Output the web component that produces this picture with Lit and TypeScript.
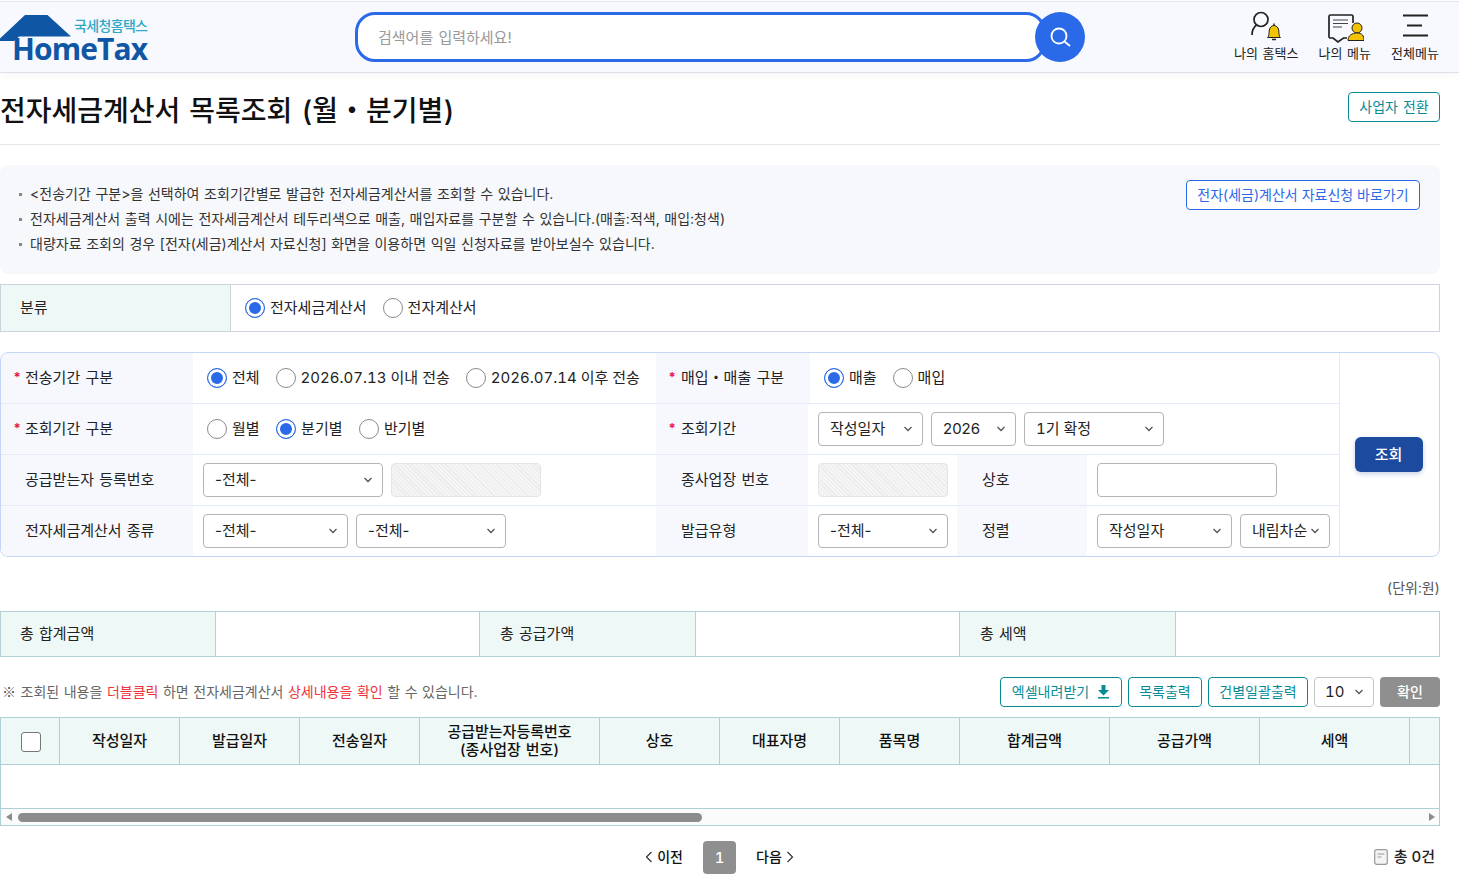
import { LitElement, html, css, svg } from "lit";
import { customElement } from "lit/decorators.js";

const chevron = svg`<svg class="chev" width="10" height="6" viewBox="0 0 10 6"><path d="M1.5 1l3.5 3.5L8.500 1" fill="none" stroke="#555" stroke-width="1.3"/></svg>`;

@customElement("app-root")
export class AppRoot extends LitElement {
  static styles = css`
    :host { display: block; width: 1459px; background: #fff; color: #222; font-family: Inter, "Noto Sans CJK KR", "Noto Sans", sans-serif; font-size: 15px; line-height: 1.2; word-spacing: 1px; }
    * { box-sizing: border-box; }
    .tn { font-variant-numeric: tabular-nums; word-spacing: 0; }
    .hdr { margin-top: 1px; height: 72px; background: #f8f9ff; border-top: 1px solid #e4e5ea; border-bottom: 1px solid #dfe1e8; display: flex; align-items: flex-start; box-shadow: 0 3px 8px rgba(0,0,0,.03); }
    .logo { width: 355px; height: 70px; flex: none; }
    .search { width: 691px; height: 50px; margin-top: 10px; border: 3px solid #2a6ae9; border-radius: 20px; background: #fff; padding: 1px 0 0 20px; display: flex; align-items: center; color: #999; font-size: 15px; flex: none; }
    .sbtn { width: 50px; height: 50px; margin: 10px 0 0 -11px; border-radius: 50%; background: #2a6ae9; display: flex; align-items: center; justify-content: center; flex: none; position: relative; }
    .nav { margin-left: auto; display: flex; gap: 20px; padding-right: 20px; padding-top: 8px; }
    .navitem { display: flex; flex-direction: column; align-items: center; font-size: 13px; color: #222; white-space: nowrap; }
    .navitem svg { display: block; height: 36px; }
    .main { width: 1440px; }
    .titlerow { height: 72px; border-bottom: 1px solid #e4e6ea; display: flex; justify-content: space-between; align-items: flex-start; }
    h1 { margin: 16px 0 0; font-size: 28px; font-weight: 500; color: #111; line-height: 44px; white-space: nowrap; word-spacing: 1.5px; font-variant-numeric: tabular-nums; }
    .obtn { display: inline-flex; align-items: center; justify-content: center; height: 30px; border: 1px solid #078c96; border-radius: 4px; color: #078c96; font-size: 14px; background: #fff; padding: 0 10px; white-space: nowrap; }
    .titlerow .obtn { margin-top: 19px; width: 92px; }
    .info { margin-top: 20px; height: 109px; border-radius: 8px; background: #f7f8fc; padding: 16px 20px 0 19px; display: flex; justify-content: space-between; align-items: flex-start; }
    .info ul { list-style: none; margin: 0; padding: 0; font-size: 14px; color: #333; word-spacing: .7px; }
    .info li { height: 25px; line-height: 25px; padding-left: 11px; position: relative; white-space: nowrap; }
    .info li::before { content: ""; position: absolute; left: 0; top: 12px; width: 3px; height: 3px; background: #888; }
    .bluebtn { width: 234px; height: 30px; border: 1px solid #2a6ae9; border-radius: 4px; color: #2a6ae9; font-size: 14px; background: #fff; display: flex; align-items: center; justify-content: center; margin-top: -1px; word-spacing: 0; }
    .cat { margin-top: 10px; height: 48px; border: 1px solid #ccd3dc; display: flex; }
    .cat .lab { width: 230px; background: #eef8f6; border-right: 1px solid #ccd3dc; display: flex; align-items: center; padding-left: 19px; }
    .cat .val { display: flex; align-items: center; padding-left: 14px; gap: 16px; }
    .radio { display: inline-flex; align-items: center; gap: 5px; white-space: nowrap; }
    .dot { width: 20px; height: 20px; border-radius: 50%; border: 1px solid #8a8a8a; background: #fff; display: block; flex: none; }
    .dot.on { border-color: #2a6ae9; box-shadow: inset 0 0 0 3px #fff; background: #2a6ae9; }
    .sf { margin-top: 20px; height: 205px; border: 1px solid #c3d6f5; border-radius: 8px; display: flex; overflow: hidden; }
    .sfl { width: 1338px; flex: none; display: flex; flex-direction: column; }
    .row { height: 51px; display: flex; border-bottom: 1px solid #e3ebf8; }
    .row:last-child { border-bottom: 0; height: 50px; }
    .l { background: #f7f8fe; display: flex; align-items: center; padding-left: 24px; position: relative; white-space: nowrap; flex: none; }
    .l.r { padding-left: 25px; }
    .req::before { content: "*"; position: absolute; left: 12.500px; color: #e6194b; font-size: 13px; top: 50%; transform: translateY(-50%); font-weight: 700; }
    .c { display: flex; align-items: center; flex: none; }
    .radios { padding-left: 14px; gap: 16px; }
    .radios.wide { gap: 16.5px; }
    .fields { padding-left: 10px; gap: 8px; }
    .sel { height: 34px; border: 1px solid #b4b4b4; border-radius: 4px; background: #fff; display: flex; align-items: center; justify-content: space-between; padding: 0 9px 0 11px; flex: none; white-space: nowrap; font-size: 15px; color: #222; }
    .sel.low { height: 30px; border-color: #c4c4c4; padding-left: 10px; }
    .hatch { height: 34px; border: 1px solid #e4e4e4; border-radius: 4px; background: repeating-linear-gradient(45deg, #ebebeb 0 1px, #f5f5f5 1px 3px); flex: none; }
    .inp { height: 34px; border: 1px solid #b4b4b4; border-radius: 4px; background: #fff; flex: none; }
    .sfr { flex: 1; border-left: 1px solid #e3ebf8; display: flex; align-items: center; justify-content: center; }
    .go { width: 68px; height: 35px; border-radius: 6px; background: #1c4a9f; color: #fff; font-weight: 500; display: flex; align-items: center; justify-content: center; box-shadow: 0 2px 5px rgba(28,74,159,.25); margin-left: -2px; }
    .unit { margin-top: 22px; text-align: right; font-size: 14px; color: #555; height: 32px; line-height: 18px; }
    .sum { height: 46px; border: 1px solid #b5d3d6; display: flex; }
    .sum .k { background: #eef8f6; display: flex; align-items: center; padding-left: 19px; width: 215px; flex: none; border-right: 1px solid #b5d3d6; }
    .sum .k.w { width: 216px; padding-left: 20px; }
    .sum .v { flex: none; width: 264px; border-right: 1px solid #b5d3d6; }
    .sum .v:last-child { border-right: 0; flex: 1; }
    .bar { margin-top: 20px; height: 30px; display: flex; align-items: center; justify-content: space-between; }
    .note { font-size: 14px; color: #666; padding-left: 2px; word-spacing: .6px; }
    .note b { font-weight: 400; color: #f0323c; }
    .ref { font-family: "Noto Sans CJK KR", sans-serif; color: #555; }
    .tools { display: flex; gap: 6px; align-items: center; }
    .tools .obtn { padding: 0; }
    .ok { width: 60px; height: 30px; border-radius: 4px; background: #8f8f8f; color: #fff; font-size: 14px; font-weight: 500; display: flex; align-items: center; justify-content: center; }
    .tbl { margin-top: 10px; height: 109px; border: 1px solid #aecfd3; display: flex; flex-direction: column; }
    .th { height: 47px; background: #eef8f6; border-bottom: 1px solid #aecfd3; display: flex; flex: none; }
    .th div { flex: none; border-right: 1px solid #aecfd3; display: flex; align-items: center; justify-content: center; text-align: center; font-weight: 500; font-size: 15px; line-height: 18px; color: #111; }
    .th div:last-child { border-right: 0; flex: 1; }
    .chk { width: 20px; height: 20px; border: 1px solid #777; border-radius: 3px; background: #fff; margin: 2px 0 0 1px; }
    .tb { height: 44px; border-bottom: 1px solid #aecfd3; flex: none; }
    .scr { flex: 1; background: #fbfbfb; display: flex; align-items: center; position: relative; padding-left: 17px; }
    .thumb { width: 684px; height: 9px; border-radius: 5px; background: #8c8c8c; }
    .al, .ar { position: absolute; top: 4px; width: 0; height: 0; border-top: 4px solid transparent; border-bottom: 4px solid transparent; }
    .al { left: 5px; border-right: 6px solid #8c8c8c; }
    .ar { right: 4px; border-left: 6px solid #8c8c8c; }
    .pg { margin-top: 15px; height: 33px; display: flex; align-items: center; position: relative; justify-content: center; gap: 20px; padding-right: 1px; font-weight: 500; font-size: 14px; color: #111; }
    .pgn { display: inline-flex; align-items: center; gap: 4px; }
    .cur { width: 33px; height: 33px; border-radius: 4px; background: #8f8f8f; color: #fff; display: flex; align-items: center; justify-content: center; font-size: 15px; }
    .total { position: absolute; right: 5px; top: 7px; display: flex; align-items: center; gap: 6px; font-weight: 500; font-size: 15px; color: #222; }
  `;

  radio(label: string, on = false, tn = false) {
    return html`<span class="radio ${tn ? "tn" : ""}"><i class="dot ${on ? "on" : ""}"></i>${label}</span>`;
  }
  sel(label: string, w: number, tn = false) {
    return html`<div class="sel ${tn ? "tn" : ""}" style="width:${w}px"><span>${label}</span>${chevron}</div>`;
  }
  lab(text: string, w: number, req = false, right = false) {
    return html`<div class="l ${req ? "req" : ""} ${right ? "r" : ""}" style="width:${w}px">${text}</div>`;
  }

  render() {
    const cols: [string, number][] = [["", 59], ["작성일자", 120], ["발급일자", 120], ["전송일자", 120], ["공급받는자등록번호", 180], ["상호", 120], ["대표자명", 120], ["품목명", 120], ["합계금액", 150], ["공급가액", 150], ["세액", 150], ["", 0]];
    return html`
      <header class="hdr">
        <svg class="logo" viewBox="0 0 355 70">
          <path d="M0 36.500L25 13H47.500L71 34.500H19L14 39H0Z" fill="#0f56a4"/>
          <text x="74" y="29" font-size="14" fill="#2ea8c4" font-family="Noto Sans CJK KR" font-weight="500" textLength="74">국세청홈택스</text>
          <text x="12" y="58" font-size="30" fill="#0f56a4" font-family="Open Sans" font-weight="700" textLength="136">HomeTax</text>
        </svg>
        <div class="search">검색어를 입력하세요!</div>
        <div class="sbtn"><svg width="24" height="24" viewBox="0 0 24 24"><circle cx="11" cy="11" r="7.500" fill="none" stroke="#fff" stroke-width="1.800"/><path d="M16.500 16.500L22 21" stroke="#fff" stroke-width="1.800" fill="none"/></svg></div>
        <nav class="nav">
          <div class="navitem">
            <svg width="36" height="36" viewBox="0 0 36 36">
              <circle cx="13" cy="9.500" r="7" fill="none" stroke="#222" stroke-width="1.700"/>
              <path d="M4 25c0-5 2-8 4.500-10" fill="none" stroke="#222" stroke-width="1.700"/>
              <path d="M19.500 27.500c1.800-1 1.300-4 1.800-7.500.5-3 2.700-4.500 4.700-4.500s4.200 1.500 4.700 4.500c.5 3.500 0 6.500 1.800 7.500Z" fill="#f2c300" stroke="#222" stroke-width="1"/>
              <path d="M24 29.500h4M26 13.500v2" stroke="#222" stroke-width="1.400"/>
            </svg>
            <span>나의 홈택스</span>
          </div>
          <div class="navitem">
            <svg width="38" height="36" viewBox="0 0 38 36">
              <path d="M21 28h-3.500l-5.500 4-5-4H4.500c-.8 0-1.500-.6-1.500-1.500V6.500C3 5.600 3.700 5 4.500 5h21c.8 0 1.500.6 1.500 1.500V13" fill="none" stroke="#222" stroke-width="1.700"/>
              <path d="M7 10h15M7 13.500h15M7 17h9" stroke="#444" stroke-width="1.200"/>
              <circle cx="31" cy="18" r="5" fill="#f2c300" stroke="#222" stroke-width="1"/>
              <path d="M22 30.500c0-5 4-7.500 9-7.500s7 2.500 7 7.500Z" fill="#f2c300" stroke="#222" stroke-width="1"/>
            </svg>
            <span>나의 메뉴</span>
          </div>
          <div class="navitem">
            <svg width="48" height="36" viewBox="0 0 48 36">
              <path d="M12 5.500h25M16 15.500h15M12 25.500h25" stroke="#222" stroke-width="1.800"/>
            </svg>
            <span>전체메뉴</span>
          </div>
        </nav>
      </header>
      <main class="main">
        <div class="titlerow">
          <h1>전자세금계산서 목록조회 (월・분기별)</h1>
          <div class="obtn">사업자 전환</div>
        </div>
        <section class="info">
          <ul>
            <li>&lt;전송기간 구분&gt;을 선택하여 조회기간별로 발급한 전자세금계산서를 조회할 수 있습니다.</li>
            <li>전자세금계산서 출력 시에는 전자세금계산서 테두리색으로 매출, 매입자료를 구분할 수 있습니다.(매출:적색, 매입:청색)</li>
            <li>대량자료 조회의 경우 [전자(세금)계산서 자료신청] 화면을 이용하면 익일 신청자료를 받아보실수 있습니다.</li>
          </ul>
          <div class="bluebtn">전자(세금)계산서 자료신청 바로가기</div>
        </section>
        <section class="cat">
          <div class="lab">분류</div>
          <div class="val">${this.radio("전자세금계산서", true)}${this.radio("전자계산서")}</div>
        </section>
        <section class="sf">
          <div class="sfl">
            <div class="row">
              ${this.lab("전송기간 구분", 192, true)}
              <div class="c radios" style="width:463px">${this.radio("전체", true)}${this.radio("2026.07.13 이내 전송", false, true)}${this.radio("2026.07.14 이후 전송", false, true)}</div>
              ${this.lab("매입・매출 구분", 154, true, true)}
              <div class="c radios">${this.radio("매출", true)}${this.radio("매입")}</div>
            </div>
            <div class="row">
              ${this.lab("조회기간 구분", 192, true)}
              <div class="c radios wide" style="width:463px">${this.radio("월별")}${this.radio("분기별", true)}${this.radio("반기별")}</div>
              ${this.lab("조회기간", 152, true, true)}
              <div class="c fields">${this.sel("작성일자", 105)}${this.sel("2026", 85)}${this.sel("1기 확정", 140, true)}</div>
            </div>
            <div class="row">
              ${this.lab("공급받는자 등록번호", 192)}
              <div class="c fields" style="width:463px">${this.sel("-전체-", 180)}<div class="hatch" style="width:150px"></div></div>
              ${this.lab("종사업장 번호", 152, false, true)}
              <div class="c fields" style="width:149px"><div class="hatch" style="width:130px"></div></div>
              ${this.lab("상호", 130, false, true)}
              <div class="c fields"><div class="inp" style="width:180px"></div></div>
            </div>
            <div class="row">
              ${this.lab("전자세금계산서 종류", 192)}
              <div class="c fields" style="width:463px">${this.sel("-전체-", 145)}${this.sel("-전체-", 150)}</div>
              ${this.lab("발급유형", 152, false, true)}
              <div class="c fields" style="width:149px">${this.sel("-전체-", 130)}</div>
              ${this.lab("정렬", 130, false, true)}
              <div class="c fields">${this.sel("작성일자", 135)}${this.sel("내림차순", 90)}</div>
            </div>
          </div>
          <div class="sfr"><div class="go">조회</div></div>
        </section>
        <div class="unit tn">(단위:원)</div>
        <section class="sum">
          <div class="k">총 합계금액</div><div class="v"></div>
          <div class="k w">총 공급가액</div><div class="v"></div>
          <div class="k w">총 세액</div><div class="v"></div>
        </section>
        <div class="bar">
          <div class="note"><span class="ref">※</span> 조회된 내용을 <b>더블클릭</b> 하면 전자세금계산서 <b>상세내용을 확인</b> 할 수 있습니다.</div>
          <div class="tools">
            <div class="obtn" style="width:122px;gap:8px">엑셀내려받기
              <svg width="13" height="14" viewBox="0 0 13 14"><path d="M4.500 0h4v5h3.500l-5.500 5.500L1 5h3.500Z" fill="#078c96"/><path d="M1 12.800h11" stroke="#078c96" stroke-width="1.500"/></svg>
            </div>
            <div class="obtn" style="width:74px">목록출력</div>
            <div class="obtn" style="width:100px">건별일괄출력</div>
            <div class="sel low tn" style="width:60px"><span>10</span>${chevron}</div>
            <div class="ok">확인</div>
          </div>
        </div>
        <section class="tbl">
          <div class="th">
            ${cols.map(([t, w], i) => html`<div style=${w ? `width:${w}px` : ""}>${i === 0 ? html`<span class="chk"></span>` : i === 4 ? html`${t}<br>(종사업장 번호)` : t}</div>`)}
          </div>
          <div class="tb"></div>
          <div class="scr"><i class="al"></i><div class="thumb"></div><i class="ar"></i></div>
        </section>
        <div class="pg">
          <span class="pgn"><svg width="8" height="12" viewBox="0 0 8 12"><path d="M6.500 1L1.500 6l5 5" fill="none" stroke="#333" stroke-width="1.200"/></svg>이전</span>
          <span class="cur tn">1</span>
          <span class="pgn">다음<svg width="8" height="12" viewBox="0 0 8 12"><path d="M1.500 1l5 5-5 5" fill="none" stroke="#333" stroke-width="1.200"/></svg></span>
          <div class="total"><svg width="14" height="16" viewBox="0 0 14 16"><rect x=".7" y=".7" width="12.600" height="14.600" rx="2" fill="#f4f4f4" stroke="#999" stroke-width="1.200"/><path d="M3.500 5h7M3.500 8h4" stroke="#999" stroke-width="1.200"/></svg><span class="tn">총 0건</span></div>
        </div>
      </main>
    `;
  }
}
